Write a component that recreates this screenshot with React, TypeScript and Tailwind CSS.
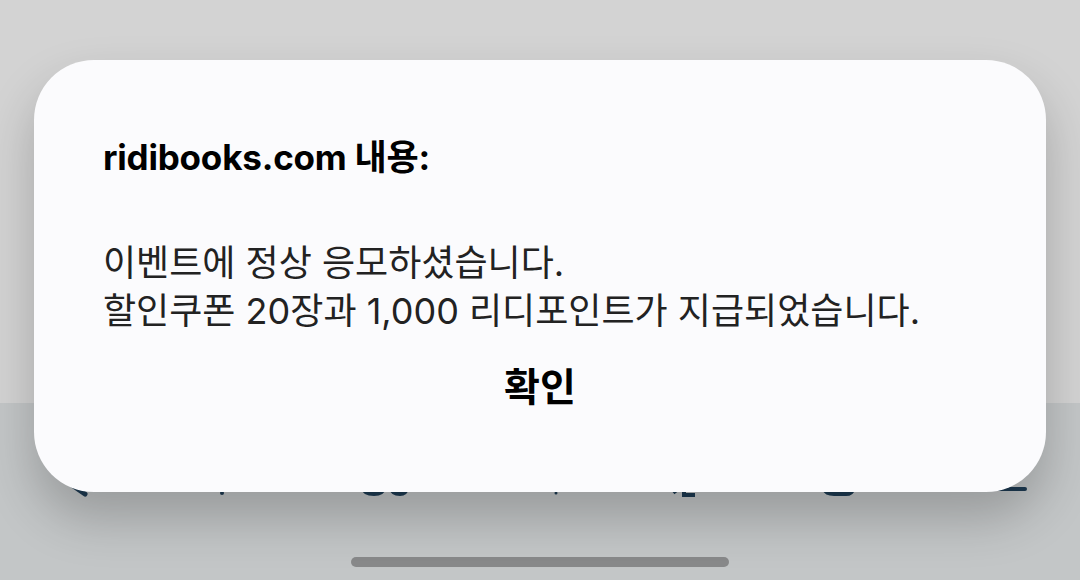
import React from "react";

const font = { fontFamily: 'Inter, "Noto Sans CJK KR", sans-serif' };

export default function App() {
  return (
    <div className="relative w-[1080px] h-[580px] overflow-hidden" style={font}>
      {/* background page */}
      <div className="flex flex-col h-full">
        <div className="h-[403px] bg-[#d3d3d3]" />
        <div className="flex-1 bg-[#c3c6c7] flex flex-col items-center">
          <svg className="mt-[78px] w-[1080px] h-[20px]" viewBox="0 0 1080 20">
            <path d="M72 4 L85 13" stroke="#1d3a52" strokeWidth="5" strokeLinecap="round" fill="none" />
            <circle cx="222" cy="12" r="2" fill="#1d3a52" />
            <path d="M362 6 Q364 13 374 13 Q383 13 385 6 M390 6 Q392 13 400 13 Q406 13 408 6" stroke="#1d3a52" strokeWidth="4" fill="none" />
            <circle cx="556" cy="12" r="1.5" fill="#1d3a52" />
            <path d="M671 6 L676 12 M684 8 L684 14 L695 14" stroke="#1d3a52" strokeWidth="4" fill="none" />
            <path d="M824 8 Q826 13 834 13 L846 13 Q852 13 853 8" stroke="#1d3a52" strokeWidth="4" fill="none" />
            <path d="M975 8 L1025 8" stroke="#1d3a52" strokeWidth="4" strokeLinecap="round" fill="none" />
          </svg>
          <div className="mt-[56px] w-[378px] h-[10px] rounded-full bg-[#88898a]" />
        </div>
      </div>

      {/* alert dialog */}
      <div className="absolute left-[34px] top-[60px] w-[1012px] h-[432px] rounded-[60px] bg-[#fbfbfd] shadow-[0_26px_50px_rgba(0,0,0,0.22)] flex flex-col px-[69px] pt-[77px]">
        <div className="text-[35px] leading-[40px] font-bold text-black tracking-[-0.2px] whitespace-nowrap">
          ridibooks.com 내용:
        </div>
        <div className="mt-[62px] text-[36px] leading-[48px] text-[#222] whitespace-nowrap">
          <div>이벤트에 정상 응모하셨습니다.</div>
          <div>할인쿠폰 20장과 1,000 리디포인트가 지급되었습니다.</div>
        </div>
        <button className="mt-[32px] self-center text-[39px] leading-[40px] font-bold text-black">
          확인
        </button>
      </div>
    </div>
  );
}
